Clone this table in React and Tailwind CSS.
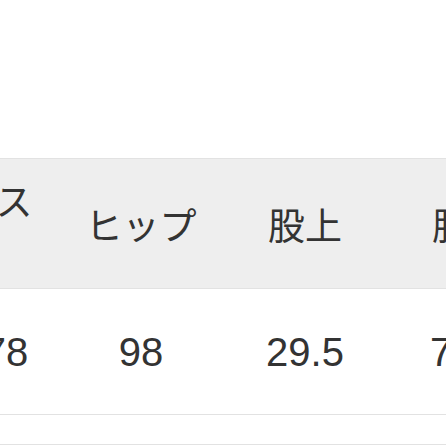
const headers = ["ウエスト", "ヒップ", "股上", "股下"];
const values = ["68-78", "98", "29.5", "76.5"];

export default function App() {
  return (
    <div className="h-[446px] w-[446px] overflow-hidden bg-white text-[#333]">
      <div className="h-[158px]" />
      <div className="-ml-[105px] w-[656px]">
        <div className="grid h-[131px] grid-cols-4 border-y border-[#e2e2e2] bg-[#eeeeee]">
          {headers.map((h) => (
            <div
              key={h}
              className="flex items-center justify-center px-[20px] text-center text-[37px] leading-[48px] [font-family:'Noto_Sans_CJK_JP',sans-serif]"
            >
              {h}
            </div>
          ))}
        </div>
        <div className="grid h-[126px] grid-cols-4 border-b border-[#e2e2e2]">
          {values.map((v) => (
            <div
              key={v}
              className="flex items-center justify-center text-[40px] [font-family:'Liberation_Sans',sans-serif]"
            >
              {v}
            </div>
          ))}
        </div>
        <div className="h-[30px] border-b border-[#e2e2e2]" />
      </div>
    </div>
  );
}
